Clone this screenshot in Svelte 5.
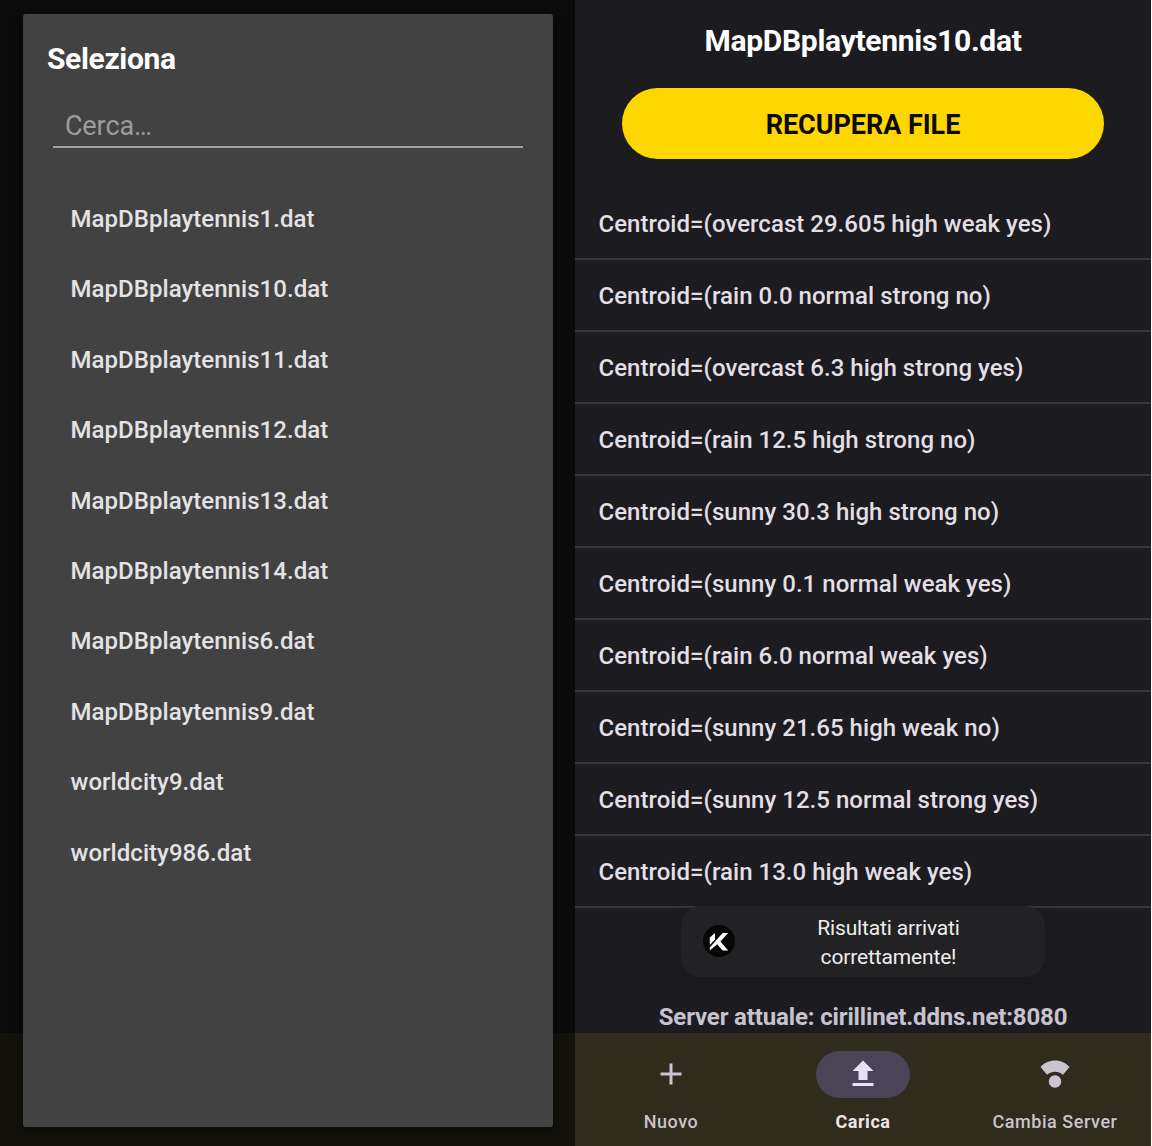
<script>
  const files = [
    'MapDBplaytennis1.dat',
    'MapDBplaytennis10.dat',
    'MapDBplaytennis11.dat',
    'MapDBplaytennis12.dat',
    'MapDBplaytennis13.dat',
    'MapDBplaytennis14.dat',
    'MapDBplaytennis6.dat',
    'MapDBplaytennis9.dat',
    'worldcity9.dat',
    'worldcity986.dat',
  ];

  const centroids = [
    'Centroid=(overcast 29.605 high weak yes)',
    'Centroid=(rain 0.0 normal strong no)',
    'Centroid=(overcast 6.3 high strong yes)',
    'Centroid=(rain 12.5 high strong no)',
    'Centroid=(sunny 30.3 high strong no)',
    'Centroid=(sunny 0.1 normal weak yes)',
    'Centroid=(rain 6.0 normal weak yes)',
    'Centroid=(sunny 21.65 high weak no)',
    'Centroid=(sunny 12.5 normal strong yes)',
    'Centroid=(rain 13.0 high weak yes)',
  ];
</script>

<main>
  <section class="picker">
    <div class="dialog">
      <h2>Seleziona</h2>
      <div class="search">Cerca…</div>
      <ul class="files">
        {#each files as file}
          <li>{file}</li>
        {/each}
      </ul>
    </div>
  </section>

  <section class="results">
    <h1>MapDBplaytennis10.dat</h1>
    <button>RECUPERA FILE</button>
    <ul class="centroids">
      {#each centroids as centroid}
        <li>{centroid}</li>
      {/each}
    </ul>
    <p class="server">Server attuale: cirillinet.ddns.net:8080</p>

    <div class="toast">
      <svg class="logo" viewBox="0 0 32 32">
        <circle cx="16" cy="16" r="16" fill="#060606" />
        <path d="M6.800 12.400 12 8v6.600L6.800 20Z" fill="#fff" />
        <path d="M6.800 22.400 19.600 8H25.200L17.400 16.400 25.200 25.400H19.600L14.200 19.200 6.800 25.400Z" fill="#fff" />
      </svg>
      <span>Risultati arrivati<br />correttamente!</span>
    </div>

    <nav>
      <div class="tab">
        <div class="pill">
          <svg viewBox="0 0 36 36"><path d="M28.5 19.5h-9v9h-3v-9h-9v-3h9v-9h3v9h9z" /></svg>
        </div>
        <span>Nuovo</span>
      </div>
      <div class="tab active">
        <div class="pill">
          <svg viewBox="0 0 36 36"><path d="M7.5 30h21v-3h-21zM7.5 15h6v9h9v-9h6L18 4.5z" /></svg>
        </div>
        <span>Carica</span>
      </div>
      <div class="tab">
        <div class="pill">
          <svg viewBox="0 0 36 36">
            <path d="M3.5 11C7.2 7 12.3 4.6 18 4.6S28.8 7 32.5 11L26 18.8C21.5 14.6 14.5 14.6 10 18.8Z" />
            <circle cx="18" cy="25.5" r="6.2" />
          </svg>
        </div>
        <span>Cambia Server</span>
      </div>
    </nav>
  </section>
</main>

<style>
  :global(body) {
    margin: 0;
    background: #fff;
  }

  main {
    display: grid;
    grid-template-columns: 575px 576px;
    width: 1151px;
    height: 1146px;
    overflow: hidden;
    font-family: Roboto, 'Liberation Sans', sans-serif;
  }

  h1, h2, p, ul {
    margin: 0;
    padding: 0;
    list-style: none;
  }

  .picker {
    box-sizing: border-box;
    height: 1146px;
    padding: 13.5px 22.5px 19px 23.4px;
    background: linear-gradient(#0b0b0b 1033px, #13120c 1033px);
  }

  .dialog {
    box-sizing: border-box;
    height: 1113.5px;
    padding: 26px 29.5px 0;
    border-radius: 3px;
    background: #424242;
    box-shadow: 0 3px 12px rgba(0, 0, 0, 0.5);
  }

  h2 {
    margin-left: -6px;
    font-size: 30px;
    line-height: 38px;
    font-weight: 700;
    letter-spacing: -0.32px;
    color: #fff;
  }

  .search {
    box-sizing: border-box;
    height: 56px;
    margin-top: 14px;
    padding: 16px 12px 0;
    border-bottom: 2px solid #a5a3a7;
    font-size: 27px;
    line-height: 36px;
    letter-spacing: -0.1px;
    color: #9c9c9c;
  }

  .files {
    margin-top: 36.5px;
  }

  .files li {
    height: 70.4px;
    padding-left: 17.7px;
    font-size: 24px;
    line-height: 70.4px;
    font-weight: 500;
    letter-spacing: 0.04px;
    color: #e4e2e4;
  }

  .results {
    position: relative;
    display: flex;
    flex-direction: column;
    height: 1146px;
    background: #1c1b20;
  }

  h1 {
    height: 88px;
    font-size: 30px;
    line-height: 82px;
    font-weight: 700;
    letter-spacing: -0.29px;
    text-align: center;
    color: #fff;
  }

  button {
    height: 71px;
    margin: 0 47px;
    padding: 2px 0 0;
    border: 0;
    border-radius: 36px;
    background: #fed700;
    font: 700 27px Roboto, sans-serif;
    letter-spacing: -0.05px;
    color: #0c0a00;
  }

  .centroids {
    margin-top: 29px;
  }

  .centroids li {
    box-sizing: border-box;
    height: 72px;
    padding-left: 23.5px;
    border-bottom: 2px solid #37363b;
    font-size: 24px;
    line-height: 73px;
    font-weight: 500;
    letter-spacing: 0.03px;
    white-space: nowrap;
    color: #e2dfe5;
  }

  .server {
    margin-top: auto;
    height: 33px;
    font-size: 24px;
    line-height: 35px;
    font-weight: 700;
    letter-spacing: -0.15px;
    text-align: center;
    color: #c6c3cf;
  }

  .toast {
    position: absolute;
    left: 106px;
    top: 906px;
    display: flex;
    align-items: center;
    box-sizing: border-box;
    width: 364px;
    height: 71px;
    padding-left: 22px;
    border-radius: 20px;
    background: #222224;
    box-shadow: 0 6px 20px rgba(0, 0, 0, 0.12);
  }

  .logo {
    width: 32px;
    height: 32px;
    margin-bottom: 2px;
  }

  .toast span {
    width: 307px;
    padding-top: 2px;
    font-size: 21px;
    line-height: 29px;
    letter-spacing: -0.15px;
    text-align: center;
    color: #f0ecec;
  }

  nav {
    display: grid;
    grid-template-columns: repeat(3, 1fr);
    height: 113px;
    background: #2f2b1d;
  }

  .tab {
    display: flex;
    flex-direction: column;
    align-items: center;
    padding-top: 18px;
    font-size: 18px;
    line-height: 25px;
    font-weight: 500;
    letter-spacing: 0.55px;
    color: #c9c4ca;
  }

  .pill {
    display: flex;
    align-items: center;
    justify-content: center;
    width: 94px;
    height: 47px;
    margin-bottom: 11px;
    border-radius: 24px;
  }

  .pill svg {
    width: 36px;
    height: 36px;
    margin-bottom: 1px;
    fill: #cac4d0;
  }

  .active {
    font-weight: 700;
    color: #ece7e7;
  }

  .active .pill {
    background: #4a4458;
  }

  .active svg {
    fill: #e8def8;
  }
</style>
